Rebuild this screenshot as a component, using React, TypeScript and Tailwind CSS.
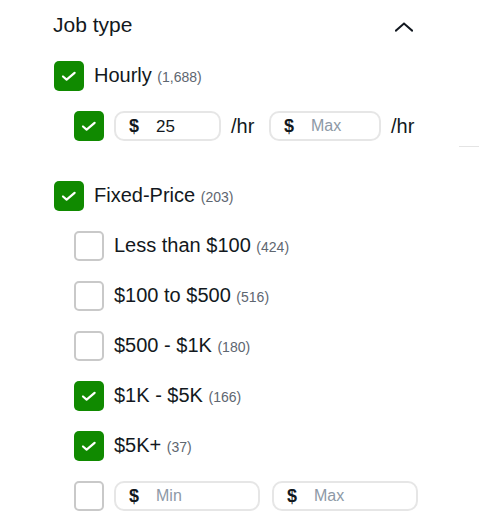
import React from "react";

const font = { fontFamily: '"Liberation Sans", Arial, sans-serif' };

function Box({ checked }: { checked: boolean }) {
  if (checked) {
    return (
      <div className="w-[30px] h-[30px] shrink-0 rounded-[5px] bg-[#108a00] flex items-center justify-center">
        <svg width="30" height="30" viewBox="0 0 30 30" fill="none">
          <path d="M9 15.5 L12.6 18.6 L20.6 11.8" stroke="#ffffff" strokeWidth="2.2" strokeLinecap="round" strokeLinejoin="round" />
        </svg>
      </div>
    );
  }
  return <div className="w-[30px] h-[30px] shrink-0 rounded-[5px] border-2 border-[#c9c9c9] bg-white" />;
}

function Label({ text, count }: { text: string; count: string }) {
  return (
    <span className="text-[20px] leading-[24px] text-[#121820] whitespace-nowrap">
      {text} <span className="text-[14px] text-[#5e6670]">({count})</span>
    </span>
  );
}

function Money({ w, value, placeholder }: { w: string; value?: string; placeholder?: string }) {
  return (
    <div className={`${w} h-[30px] shrink-0 rounded-[10px] border-2 border-[#e6e6e6] flex items-center pl-[13px]`}>
      <span className="w-[27px] text-[18px] font-bold text-[#121820] leading-none">$</span>
      {value ? (
        <span className="text-[17px] text-[#121820] leading-none">{value}</span>
      ) : (
        <span className="text-[16px] text-[#8d99a6] leading-none">{placeholder}</span>
      )}
    </div>
  );
}

function Row({ indent, children }: { indent?: boolean; children: React.ReactNode }) {
  return (
    <div className={`h-[50px] flex items-center gap-[10px] ${indent ? "pl-[20px]" : ""}`}>{children}</div>
  );
}

export default function App() {
  return (
    <div className="w-[479px] h-[531px] bg-white overflow-hidden pl-[54px]" style={font}>
      <div className="w-[364px]">
        <div className="h-[51px] pb-[1px] flex items-center justify-between">
          <span className="text-[21px] text-[#121820] -ml-[1px]">Job type</span>
          <svg width="18" height="10" viewBox="0 0 18 10" fill="none" className="mr-[5px] mt-[3px]">
            <path d="M1 8.5 L9 1.5 L17 8.5" stroke="#121820" strokeWidth="2" strokeLinecap="square" />
          </svg>
        </div>
        <Row>
          <Box checked />
          <Label text="Hourly" count="1,688" />
        </Row>
        <div className="h-[45px] pt-[10px] pl-[20px] flex items-start gap-[10px]">
          <Box checked />
          <Money w="w-[107px]" value="25" />
          <span className="w-[28px] h-[30px] flex items-center shrink-0 text-[20px] text-[#121820]">/hr</span>
          <Money w="w-[112px]" placeholder="Max" />
          <span className="h-[30px] flex items-center text-[20px] text-[#121820]">/hr</span>
        </div>
      </div>
      <div className="flex justify-end">
        <div className="w-[20px] h-px bg-[#e4e4e4]" />
      </div>
      <div className="h-[24px]" />
      <div className="w-[364px]">
        <Row>
          <Box checked />
          <Label text="Fixed-Price" count="203" />
        </Row>
        <Row indent>
          <Box checked={false} />
          <Label text="Less than $100" count="424" />
        </Row>
        <Row indent>
          <Box checked={false} />
          <Label text="$100 to $500" count="516" />
        </Row>
        <Row indent>
          <Box checked={false} />
          <Label text="$500 - $1K" count="180" />
        </Row>
        <Row indent>
          <Box checked />
          <Label text="$1K - $5K" count="166" />
        </Row>
        <Row indent>
          <Box checked />
          <Label text="$5K+" count="37" />
        </Row>
        <Row indent>
          <Box checked={false} />
          <div className="flex gap-[12px]">
            <Money w="w-[146px]" placeholder="Min" />
            <Money w="w-[146px]" placeholder="Max" />
          </div>
        </Row>
      </div>
    </div>
  );
}
